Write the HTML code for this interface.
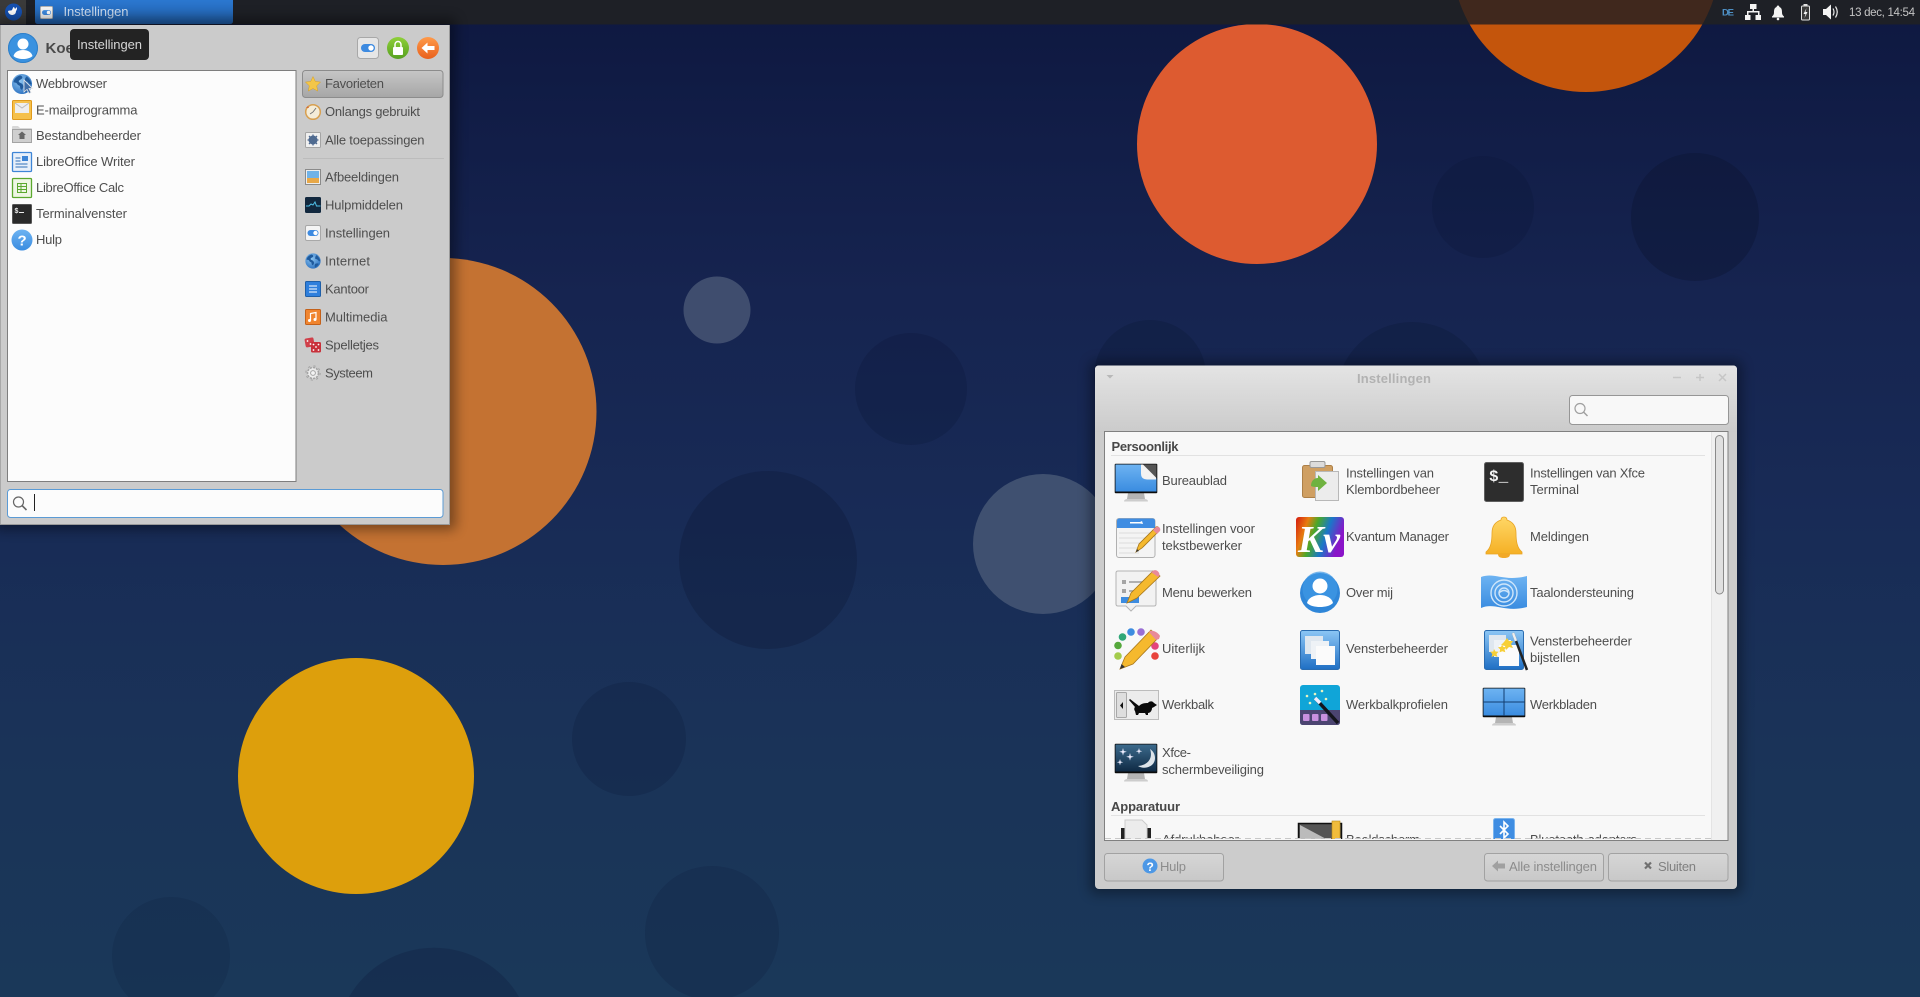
<!DOCTYPE html>
<html><head><meta charset="utf-8"><title>Instellingen</title>
<style>
html,body{margin:0;padding:0;width:1920px;height:997px;overflow:hidden;background:#162a52}
svg{display:block}
text{font-family:"Liberation Sans",sans-serif;font-size:13px;fill:#4e4e4e}
.c{fill:#4e4e4e}
.b{font-weight:bold;fill:#484848}
.d{fill:#8c8c8c}
</style></head><body>
<svg width="1920" height="997" viewBox="0 0 1920 997" xmlns="http://www.w3.org/2000/svg">
<defs>
<linearGradient id="bg" x1="0" y1="0" x2="0" y2="1"><stop offset="0" stop-color="#0e1840"/><stop offset=".3" stop-color="#162450"/><stop offset=".52" stop-color="#182b56"/><stop offset=".75" stop-color="#1a3358"/><stop offset="1" stop-color="#1a3859"/></linearGradient>
<linearGradient id="task" x1="0" y1="0" x2="0" y2="1"><stop offset="0" stop-color="#2b78d0"/><stop offset="1" stop-color="#2160ac"/></linearGradient>
<linearGradient id="tb" x1="0" y1="0" x2="0" y2="1"><stop offset="0" stop-color="#e4e4e4"/><stop offset="1" stop-color="#cbcbcb"/></linearGradient>
<linearGradient id="btn" x1="0" y1="0" x2="0" y2="1"><stop offset="0" stop-color="#d6d6d6"/><stop offset="1" stop-color="#c8c8c8"/></linearGradient>
<linearGradient id="sel" x1="0" y1="0" x2="0" y2="1"><stop offset="0" stop-color="#c6c6c6"/><stop offset="1" stop-color="#a6a6a6"/></linearGradient>
<linearGradient id="blue" x1="0" y1="0" x2="0" y2="1"><stop offset="0" stop-color="#6db3f2"/><stop offset="1" stop-color="#3a8ce0"/></linearGradient>
<linearGradient id="blue2" x1="0" y1="0" x2="0" y2="1"><stop offset="0" stop-color="#8cc6f5"/><stop offset="1" stop-color="#1f6fc4"/></linearGradient>
<linearGradient id="scr" x1="0" y1="0" x2="0" y2="1"><stop offset="0" stop-color="#3c6a8c"/><stop offset="1" stop-color="#0f2a44"/></linearGradient>
<linearGradient id="grn" x1="0" y1="0" x2="0" y2="1"><stop offset="0" stop-color="#8fd03a"/><stop offset="1" stop-color="#56a020"/></linearGradient>
<linearGradient id="org" x1="0" y1="0" x2="0" y2="1"><stop offset="0" stop-color="#ff9a4a"/><stop offset="1" stop-color="#e8601c"/></linearGradient>
<linearGradient id="yel" x1="0" y1="0" x2="0" y2="1"><stop offset="0" stop-color="#ffd766"/><stop offset="1" stop-color="#f5b025"/></linearGradient>
<linearGradient id="rb" x1="0" y1="0" x2="1" y2="0.3"><stop offset="0" stop-color="#d41a10"/><stop offset=".25" stop-color="#e87c10"/><stop offset=".45" stop-color="#4aa82a"/><stop offset=".7" stop-color="#1a78c8"/><stop offset="1" stop-color="#8a14c8"/></linearGradient>
<radialGradient id="glb" cx=".4" cy=".35" r=".7"><stop offset="0" stop-color="#8cc4f0"/><stop offset="1" stop-color="#2a70c0"/></radialGradient>
<filter id="sh" x="-10%" y="-10%" width="120%" height="120%"><feGaussianBlur stdDeviation="6"/></filter>
<clipPath id="cl"><rect x="1105" y="432" width="606" height="407"/></clipPath>
<clipPath id="pn"><rect x="1400" y="0" width="400" height="24.5"/></clipPath>
<symbol id="globe" viewBox="0 0 22 22"><circle cx="11" cy="11" r="10.5" fill="url(#glb)"/><path d="M9 2c-3 1-6 3-7 7 2 1 3 0 4 2s3 1 3 3 1 3 2 3c1-2 2-3 1-5s-3-2-4-3 0-2 2-3 2-3-1-4zM16 3c2 2 4 4 5 8-2 1-3-1-4-2s-3 0-3-2 1-3 2-4zM14 15c2-1 4-1 5 0-1 2-3 4-5 5-1-2-1-3 0-5z" fill="#1f5a9c"/></symbol>
<symbol id="tog" viewBox="0 0 16 16"><rect x=".5" y=".5" width="15" height="15" rx="1.5" fill="#f4f4f4" stroke="#a8a8a8"/><rect x="2.5" y="5" width="11" height="6" rx="3" fill="#3d8ae0"/><circle cx="10.5" cy="8" r="2.2" fill="#fff"/></symbol>
<symbol id="mon" viewBox="0 0 44 40"><path d="M14 30h16l1 6H13z" fill="#b4b4b4"/><path d="M10 38.500q0-2.500 4-2.500h16q4 0 4 2.500z" fill="#cdcdcd"/><rect x=".7" y=".7" width="42.6" height="29.6" rx="1" fill="#0c0c0c"/></symbol>
</defs>

<!-- wallpaper -->
<rect width="1920" height="997" fill="url(#bg)"/>
<circle cx="1586" cy="-42" r="134" fill="#c4550c"/>
<circle cx="1257" cy="144" r="120" fill="#dd5b30"/>
<circle cx="443" cy="411.5" r="153.5" fill="#c47232"/>
<circle cx="356" cy="776" r="118" fill="#dd9f0c"/>
<circle cx="717" cy="310" r="33.5" fill="#3f4d6e"/>
<circle cx="1043" cy="544" r="70" fill="#3f5070"/>
<g fill="#0a1430">
<circle cx="1483" cy="207" r="51" fill-opacity=".22"/><circle cx="1695" cy="217" r="64" fill-opacity=".36"/>
<circle cx="911" cy="389" r="56" fill-opacity=".22"/><circle cx="1150" cy="376" r="56" fill-opacity=".24"/><circle cx="1412" cy="398" r="76" fill-opacity=".24"/>
<circle cx="768" cy="560" r="89" fill-opacity=".26"/><circle cx="629" cy="739" r="57" fill-opacity=".2"/>
<path d="M692.200 997A67 67 0 1 1 731.800 997Z" fill-opacity=".18"/>
<path d="M128.600 997A59 59 0 1 1 213.400 997Z" fill-opacity=".14"/>
<path d="M349 997A98 98 0 0 1 519 997Z" fill-opacity=".22"/>
</g>

<!-- panel -->
<rect width="1920" height="24.5" fill="#1e2026"/>
<circle cx="1586" cy="-42" r="134" fill="#40281d" clip-path="url(#pn)"/>
<rect x="0" y="0" width="26" height="24.5" fill="#3a3a3a"/>
<circle cx="13.5" cy="12" r="8.5" fill="#1550b0"/>
<path d="M8 11c2-1 3 0 4-1 1-2 1-3 2-3l1 2 2-2c0 2 0 3-1 4 0 3-2 4-4 4-2 0-4-2-4-4z" fill="#fff"/>
<path d="M35 0h198v21q0 3-3 3H38q-3 0-3-3z" fill="url(#task)"/>
<use href="#tog" x="40" y="6" width="13" height="13"/>
<text x="63.5" y="16" textLength="65" style="fill:#cfdff2">Instellingen</text>
<text x="1722" y="15.5" textLength="12" style="font-size:9.5px;font-weight:bold;fill:#4d8fc4">DE</text>
<g fill="#f4f4f4"><rect x="1750" y="4" width="6.500" height="5"/><rect x="1752.500" y="9" width="1.500" height="3"/><rect x="1747" y="11" width="12.500" height="1.500"/><rect x="1747" y="12" width="1.500" height="3"/><rect x="1758" y="12" width="1.500" height="3"/><rect x="1745" y="15" width="5.500" height="5"/><rect x="1755.500" y="15" width="5.500" height="5"/></g>
<path d="M1778 5.500c.8 0 1.300.6 1.400 1.500 2.300.8 2.600 3 2.600 5.500 0 2 .8 3 2 4v1h-12v-1c1.200-1 2-2 2-4 0-2.500.3-4.700 2.600-5.500.1-.9.6-1.500 1.400-1.500z" fill="#f4f4f4"/><circle cx="1778" cy="19" r="1.300" fill="#f4f4f4"/>
<rect x="1801.500" y="6" width="8" height="14" rx="1" fill="#3a3a3a" stroke="#e0e0e0"/><rect x="1803.500" y="4" width="4" height="2" fill="#e0e0e0"/><path d="M1806.500 8l-3 6h2l-1 4 3-6h-2z" fill="#f4f4f4"/>
<path d="M1823 9h3l5-4.500v15l-5-4.500h-3z" fill="#f4f4f4"/><path d="M1833 8.500q2 3.500 0 7M1835.500 6.500q3.500 5.500 0 11" fill="none" stroke="#eaeaea" stroke-width="1.200"/>
<text x="1849" y="16" textLength="66" style="font-size:11.500px;fill:#c4c4c4">13 dec, 14:54</text>

<!-- settings window -->
<rect x="1090" y="361" width="652" height="533" rx="6" fill="#000" opacity=".35" filter="url(#sh)"/>
<rect x="1095" y="365.500" width="642" height="523.500" rx="4" fill="#cccccc"/>
<path d="M1095 432v-62.500q0-4 4-4h634q4 0 4 4v62.500z" fill="url(#tb)"/>
<path d="M1106.500 375h7l-3.500 3.500z" fill="#b8b8b8"/>
<text x="1357" y="383" class="b" textLength="74" style="fill:#b2b2b2">Instellingen</text>
<g stroke="#c6c6c6" stroke-width="1.500" fill="none"><path d="M1673 377.500h8"/><path d="M1696 377.500h8M1700 374v7"/><path d="M1719 374l7 7m0-7l-7 7"/></g>
<rect x="1569.500" y="395.500" width="159" height="29" rx="3" fill="#f8f8f8" stroke="#969696"/>
<circle cx="1580" cy="408.500" r="5" fill="none" stroke="#a0a0a0" stroke-width="1.200"/><path d="M1583.500 412l4 4" stroke="#a0a0a0" stroke-width="1.500"/>
<rect x="1104.500" y="431.500" width="623.500" height="409" fill="#f8f8f8" stroke="#808080"/>
<rect x="1711" y="432" width="16.500" height="408" fill="#f0f0f0"/><rect x="1711" y="432" width="1" height="408" fill="#e4e4e4"/>
<rect x="1715.500" y="435.500" width="8" height="158.500" rx="4" fill="#e0e0e0" stroke="#8a8a8a"/>

<text x="1111.500" y="451" class="b" textLength="67">Persoonlijk</text>
<rect x="1111" y="455" width="594" height="1" fill="#e2e2e2"/>
<text x="1111" y="811" class="b" textLength="69">Apparatuur</text>
<rect x="1111" y="815" width="594" height="1" fill="#e2e2e2"/>

<!-- Items text -->
<g class="c">
<text x="1162" y="485" textLength="65" class="c">Bureaublad</text>
<text x="1346" y="477.500" textLength="88" class="c">Instellingen van</text>
<text x="1346" y="494" textLength="94" class="c">Klembordbeheer</text>
<text x="1530" y="477.500" textLength="115" class="c">Instellingen van Xfce</text>
<text x="1530" y="494" textLength="49" class="c">Terminal</text>
<text x="1162" y="533" textLength="93" class="c">Instellingen voor</text>
<text x="1162" y="550" textLength="80" class="c">tekstbewerker</text>
<text x="1346" y="541" textLength="103" class="c">Kvantum Manager</text>
<text x="1530" y="541" textLength="59" class="c">Meldingen</text>
<text x="1162" y="597" textLength="90" class="c">Menu bewerken</text>
<text x="1346" y="597" textLength="47" class="c">Over mij</text>
<text x="1530" y="597" textLength="104" class="c">Taalondersteuning</text>
<text x="1162" y="653" textLength="43" class="c">Uiterlijk</text>
<text x="1346" y="653" textLength="102" class="c">Vensterbeheerder</text>
<text x="1530" y="645.500" textLength="102" class="c">Vensterbeheerder</text>
<text x="1530" y="662" textLength="50" class="c">bijstellen</text>
<text x="1162" y="709" textLength="52" class="c">Werkbalk</text>
<text x="1346" y="709" textLength="102" class="c">Werkbalkprofielen</text>
<text x="1530" y="709" textLength="67" class="c">Werkbladen</text>
<text x="1162" y="757" textLength="29" class="c">Xfce-</text>
<text x="1162" y="774" textLength="102" class="c">schermbeveiliging</text>
</g>
<g clip-path="url(#cl)">
<text x="1162" y="844" textLength="77" class="c">Afdrukbeheer</text>
<text x="1346" y="844" textLength="74" class="c">Beeldscherm</text>
<text x="1530" y="844" textLength="107" class="c">Bluetooth-adapters</text>
<!-- printer -->
<rect x="1121" y="828" width="30" height="14" fill="#222"/><path d="M1125 820h17l5 5v16h-22z" fill="#ececec" stroke="#ccc"/>
<!-- display -->
<rect x="1298.500" y="823.500" width="43" height="18" fill="#555" stroke="#111" stroke-width="1.500"/><path d="M1300 825l30 16h-30z" fill="#ddd" opacity=".75"/><rect x="1332" y="821" width="8" height="20" fill="#f0bc3c" stroke="#b88a18" stroke-width=".6"/>
<!-- bluetooth -->
<rect x="1493.500" y="818.500" width="21" height="24" rx="2" fill="#3f8de2" stroke="#7ab4ee"/><path d="M1500 826l8 8-4 4v-16l4 4-8 8" fill="none" stroke="#fff" stroke-width="1.600"/>
</g>
<path d="M1105 838.500h606" stroke="#c8c8c8" stroke-dasharray="6 4"/>

<!-- Bureaublad -->
<use href="#mon" x="1114" y="463" width="44" height="40"/>
<rect x="1115.500" y="464.500" width="41" height="27" fill="url(#blue)"/>
<path d="M1142 464.500h14.500v14z" fill="#555"/><path d="M1141 464.500h2l13 13v2h-9q-6 0-6-6z" fill="#f2f2f2"/>
<!-- Clipboard -->
<rect x="1302.500" y="465.500" width="30" height="32" rx="2" fill="#cf9f62" stroke="#ad8048"/><rect x="1310" y="461.500" width="15" height="6" rx="1.500" fill="#dcdcdc" stroke="#999"/>
<rect x="1315.500" y="471.500" width="23" height="29" fill="#ececec" stroke="#b8b8b8"/>
<path d="M1311 486c0-5 3-8 7-8v-3l9 8-9 8v-4c-3 0-5 0-7-1z" fill="#6fb240"/>
<!-- Terminal -->
<rect x="1484.500" y="462.500" width="39" height="39" rx="2" fill="#2d2d2d" stroke="#606060"/>
<text x="1489" y="481" style="font-size:16px;font-weight:bold;fill:#f4f4f4;font-family:'Liberation Mono',monospace">$_</text>
<!-- text editor prefs -->
<rect x="1116.500" y="518.500" width="38.500" height="39" rx="2.500" fill="#f4f4f4" stroke="#b0b0b0"/>
<path d="M1117 528v-7q0-2.500 2.500-2.500h33q2.500 0 2.500 2.500v7z" fill="#3f8de2"/>
<path d="M1130 522h10l2-1 1 3-3-.5h-10z" fill="#fff"/>
<g stroke="#dcdcdc"><path d="M1119 533h34M1119 538h30M1119 543h26M1119 548h22M1119 553h20"/></g>
<path d="M1136 552l3-8 17-17c2-1 4 1 3 4l-17 17z" fill="#f5b92e" stroke="#a8781c" stroke-width=".8"/><path d="M1153 530l4 4 3-3c1-3-1-5-4-4z" fill="#e88a98"/><path d="M1136 552l1-3 2 2z" fill="#333"/>
<!-- Kvantum -->
<rect x="1296" y="517" width="48" height="40" rx="3" fill="url(#rb)"/>
<text x="1298" y="552" style="font-family:'Liberation Serif',serif;font-size:38px;font-weight:bold;font-style:italic;fill:#fff" textLength="42">Kv</text>
<!-- Bell -->
<path d="M1504 517c2 0 3 1 3 3 6 2 9 6 9 13 0 8 1 15 6 19v2h-36v-2c5-4 6-11 6-19 0-7 3-11 9-13 0-2 1-3 3-3z" fill="url(#yel)" stroke="#e8a424" stroke-width=".8"/>
<path d="M1498 554h12c0 3-2 4-6 4s-6-1-6-4z" fill="#f2a928"/>
<!-- Menu editor -->
<path d="M1118 571h36q2 0 2 2v31q0 2-2 2h-18l-5 5-5-5h-8q-2 0-2-2v-31q0-2 2-2z" fill="#f2f2f2" stroke="#b4b4b4"/>
<g fill="#a4a4a4"><rect x="1122" y="580" width="4" height="4"/><rect x="1122" y="589" width="4" height="4"/></g>
<g stroke="#9a9a9a" stroke-width="1.500"><path d="M1129 582h18M1129 591h8"/></g>
<rect x="1121" y="597" width="18" height="6" fill="#3d8ce0"/>
<path d="M1127 603l4-10 22-22 7 5-23 22z" fill="#f5b92e" stroke="#a8781c" stroke-width=".8"/><path d="M1153 571c3-3 8 2 6 5l-1 1-7-5z" fill="#e88a98"/>
<!-- Over mij -->
<circle cx="1320" cy="593" r="20" fill="#2f86d8"/><circle cx="1320" cy="589" r="17.500" fill="#3f98e6" opacity=".7"/>
<circle cx="1320" cy="586" r="7.500" fill="#fff"/><path d="M1307 603c1-5 7-8 13-8s12 3 13 8c-3 3-8 4-13 4s-10-1-13-4z" fill="#fff"/>
<!-- Flag -->
<path d="M1481 577c14-5 22 5 46-1v31c-22 6-32-5-46 1z" fill="url(#blue)"/>
<g fill="none" stroke="#cfe6fa" stroke-width="1.400"><circle cx="1504" cy="593" r="13"/><circle cx="1504" cy="593" r="9"/><circle cx="1504" cy="593" r="5"/><path d="M1499 593q5-5 10 0"/></g>
<!-- Uiterlijk -->
<g><circle cx="1118" cy="656" r="3.800" fill="#a4cc4c"/><circle cx="1118" cy="645.500" r="3.800" fill="#55a83c"/><circle cx="1122.500" cy="637" r="3.800" fill="#30a878"/><circle cx="1131" cy="632" r="3.800" fill="#3d8ce0"/><circle cx="1141" cy="632" r="3.800" fill="#9a6fd4"/><circle cx="1155" cy="646" r="3.800" fill="#e4457c"/><circle cx="1155" cy="656" r="3.800" fill="#e8443c"/></g>
<path d="M1120 669l5-12 26-27 8 7-26 27z" fill="#f5b92e" stroke="#a8781c" stroke-width=".8"/><path d="M1149 632c2-3 9 0 11 4l-1 3-3 1z" fill="#e88a98"/><path d="M1120 669l1.500-5 3.500 3z" fill="#333"/>
<!-- Vensterbeheerder -->
<rect x="1300.500" y="630.500" width="39" height="39" rx="2" fill="url(#blue2)" stroke="#2a6cb0"/>
<rect x="1305" y="636" width="18" height="18" fill="#dfe7ef"/><rect x="1311" y="641" width="18" height="18" fill="#eef2f6"/><rect x="1316" y="646" width="19" height="19" fill="#fbfbfb"/>
<!-- Tweaks -->
<rect x="1484.500" y="630.500" width="39" height="39" rx="2" fill="url(#blue2)" stroke="#2a6cb0"/>
<rect x="1489" y="635" width="17" height="17" fill="#dfe7ef"/><rect x="1494" y="640" width="17" height="17" fill="#eef2f6"/><rect x="1499" y="645" width="20" height="21" fill="#fbfbfb"/>
<path d="M1507 638l2 3 4 0-2 3 2 4-4-1-3 3-1-4-4-1 3-3z" fill="#f7cf36"/><path d="M1494 649l1.500 2.500 3 .2-2 2.300 1 3-3-1.300-3 1.300.8-3-2-2.300 3-.2z" fill="#f7cf36"/><path d="M1502 645l1.500 2 3 .2-2 2 .8 3-3-1-2.800 1.200.5-3-2-2.200 3-.3z" fill="#f7cf36"/>
<path d="M1513 633l14 37" stroke="#222" stroke-width="2.500"/><path d="M1513 633l3 8" stroke="#eee" stroke-width="2.500"/>
<!-- Werkbalk -->
<rect x="1114.500" y="690.500" width="44" height="29" fill="#ececec" stroke="#bcbcbc"/><rect x="1116.500" y="692.500" width="10" height="25" rx="1" fill="#dedede" stroke="#a8a8a8"/><path d="M1123 702v7l-3-3.500z" fill="#111"/>
<path d="M1130 699l9 7c3-3 6-3 9-3 1-2 4-2 5-1l1 1 3 2-3 2-2 1c0 3-2 5-4 5v2h-2l-1-2h-6l-1 2h-2l-1-4c-1-1-1-3 0-4l-6-7z" fill="#0a0a0a"/>
<!-- Profiles -->
<rect x="1300" y="685" width="40" height="40" rx="3" fill="#10a5d8"/><path d="M1300 710h40v12q0 3-3 3h-34q-3 0-3-3z" fill="#4b4470"/>
<g fill="#c890de"><rect x="1303" y="714" width="6.500" height="7" rx="1"/><rect x="1312" y="714" width="6.500" height="7" rx="1"/><rect x="1321" y="714" width="6.500" height="7" rx="1"/></g>
<path d="M1315 698l23 25" stroke="#14141c" stroke-width="3.500"/><path d="M1315 698l5 5" stroke="#eef" stroke-width="3.500"/>
<g fill="#e8f4c0"><circle cx="1307" cy="696" r="1.300"/><circle cx="1315" cy="694" r="1.300"/><circle cx="1322" cy="691" r="1.300"/><circle cx="1326" cy="699" r="1.300"/><circle cx="1310" cy="703" r="1.300"/></g>
<!-- Werkbladen -->
<use href="#mon" x="1482" y="687" width="44" height="40"/>
<rect x="1483.500" y="688.500" width="41" height="27" fill="url(#blue)"/><path d="M1504 688v28M1483 702h42" stroke="#123d70" stroke-width="1"/>
<!-- Screensaver -->
<use href="#mon" x="1114" y="743" width="44" height="40"/>
<rect x="1115.500" y="744.500" width="41" height="27" fill="url(#scr)"/>
<path d="M1150 749c3 8-1 16-12 17 6 4 17 1 17-8 0-4-2-7-5-9z" fill="#dde4ea"/>
<g fill="#eef"><path d="M1123 748l.8 3 3 .8-3 .8-.8 3-.8-3-3-.8 3-.8z"/><path d="M1130 753l.8 3 3 .8-3 .8-.8 3-.8-3-3-.8 3-.8z"/><path d="M1139 748l.7 2.500 2.500.7-2.500.7-.7 2.500-.7-2.500-2.500-.7 2.500-.7z"/><path d="M1120 759l.7 2.500 2.500.7-2.500.7-.7 2.500-.7-2.500-2.500-.7 2.500-.7z"/></g>

<!-- window buttons -->
<rect x="1104.500" y="853.500" width="119" height="27.500" rx="3" fill="url(#btn)" stroke="#a2a2a2"/>
<circle cx="1150" cy="866" r="7.500" fill="#4d98e6"/><text x="1146.500" y="871" style="font-size:12px;font-weight:bold;fill:#fff">?</text>
<text x="1160" y="871" class="d" textLength="26">Hulp</text>
<rect x="1484.500" y="853.500" width="119" height="27.500" rx="3" fill="url(#btn)" stroke="#a2a2a2"/>
<path d="M1492 866l6-5.500v3h7v5h-7v3z" fill="#a0a0a0"/>
<text x="1509" y="871" class="d" textLength="88">Alle instellingen</text>
<rect x="1608.500" y="853.500" width="119.500" height="27.500" rx="3" fill="url(#btn)" stroke="#a2a2a2"/>
<path d="M1645 862.500l6 6m0-6l-6 6" stroke="#707070" stroke-width="2.200"/>
<text x="1658" y="871" class="d" textLength="38" style="fill:#808080">Sluiten</text>

<!-- menu -->
<rect x="-6" y="18" width="462" height="512" rx="4" fill="#000" opacity=".38" filter="url(#sh)"/>
<rect x="0" y="25" width="449.500" height="499" fill="#cbcbcb"/>
<rect x="449" y="25" width="1" height="499" fill="#9a9a9a"/><rect y="524" width="450" height="1" fill="#9a9a9a"/>
<rect y="25" width="1" height="499" fill="#a8a8a8"/>
<!-- header -->
<circle cx="23" cy="48" r="15" fill="#3a92e0"/><circle cx="23" cy="48" r="14.500" fill="none" stroke="#2f7fc8"/>
<circle cx="23" cy="44" r="5.500" fill="#fff"/><path d="M13.500 56c1-4 5-6 9.500-6s8.500 2 9.500 6c-2 2-6 3-9.500 3s-7.500-1-9.500-3z" fill="#fff"/>
<text x="45.500" y="53" style="font-size:15px;font-weight:bold;fill:#4a4a4a">Koen</text>
<rect x="70" y="29" width="79" height="31" rx="4" fill="#232323"/>
<text x="77" y="49" textLength="65" style="fill:#d6d6d6">Instellingen</text>
<rect x="357.500" y="37.500" width="21" height="21" rx="3" fill="#e6e6e6" stroke="#a8a8a8"/><rect x="361" y="44" width="14" height="8" rx="4" fill="#3d8ae0"/><circle cx="371" cy="48" r="2.700" fill="#fff"/>
<circle cx="398" cy="48" r="11" fill="url(#grn)"/><rect x="393" y="47" width="10" height="8" rx="1" fill="#fff"/><path d="M395 47v-2.500a3 3 0 0 1 6 0V47" fill="none" stroke="#fff" stroke-width="1.500"/>
<circle cx="428" cy="48" r="11" fill="url(#org)"/><path d="M421.500 48l6-5.500v3.500h7v4h-7v3.500z" fill="#fff"/>
<!-- list -->
<rect x="7.500" y="70.500" width="288.500" height="411" fill="#fcfcfc" stroke="#7e7e7e"/>
<use href="#globe" x="11.500" y="73.500" width="21" height="21"/>
<path d="M24 80v12l3-2.500 2 4 2-1-2-4h3.500z" fill="#3f6ea8" stroke="#e8e8e8" stroke-width=".8"/>
<rect x="12.500" y="100.500" width="19" height="19" rx="1" fill="#f5c04a" stroke="#e09a1c"/><rect x="15" y="103" width="14" height="10" fill="#eee"/><path d="M15 103l7 5 7-5" fill="none" stroke="#bbb"/>
<path d="M12 132v-5q0-1 1-1h5l2 2h11q1 0 1 1v3z" fill="#d8d8d8"/><rect x="12.500" y="129.500" width="19" height="13" fill="#cfcfcf" stroke="#a4a4a4"/><path d="M22 131.500l4 3.500h-1.500v4h-5v-4H18z" fill="#666"/>
<rect x="12.500" y="152.500" width="19" height="19" rx="1" fill="#e8f0fa" stroke="#3e85d6" stroke-width="1.300"/><path d="M15.500 158h5M15.500 161h5M15.500 164h12M15.500 167h12" stroke="#2f6fb8"/><rect x="22" y="156" width="6" height="5" fill="#3e85d6"/>
<rect x="12.500" y="178.500" width="19" height="19" rx="1" fill="#eef6e4" stroke="#5ba82e" stroke-width="1.300"/><rect x="17.500" y="183.500" width="9" height="9" fill="none" stroke="#5ba82e"/><path d="M17.500 186.500h9M17.500 189.500h9M21 183.500v9" stroke="#5ba82e"/>
<rect x="12.500" y="204.500" width="19" height="19" rx="1" fill="#2a2a2a" stroke="#555"/><text x="14.500" y="213" style="font-size:7px;font-weight:bold;fill:#eee">$</text><rect x="19" y="212" width="5" height="1" fill="#eee"/>
<circle cx="22" cy="240" r="10.500" fill="url(#blue)"/><text x="17.500" y="245.500" style="font-size:15px;font-weight:bold;fill:#fff">?</text>
<text x="36" y="88" textLength="71" class="c" >Webbrowser</text>
<text x="36" y="114.500" textLength="101.500" class="c">E-mailprogramma</text>
<text x="36" y="140" textLength="105" class="c">Bestandbeheerder</text>
<text x="36" y="166" textLength="99" class="c">LibreOffice Writer</text>
<text x="36" y="192" textLength="88" class="c">LibreOffice Calc</text>
<text x="36" y="218" textLength="91" class="c">Terminalvenster</text>
<text x="36" y="244" textLength="26" class="c">Hulp</text>
<!-- categories -->
<rect x="302.500" y="70.500" width="140.500" height="27" rx="3" fill="url(#sel)" stroke="#8c8c8c"/>
<path d="M313 76.500l2.300 4.900 5.300.7-3.900 3.700 1 5.300-4.700-2.600-4.700 2.600 1-5.300-3.900-3.700 5.300-.7z" fill="#f3c649" stroke="#d8a020" stroke-width=".5"/>
<circle cx="313" cy="112" r="7.300" fill="#f4ecd8" stroke="#d8a050" stroke-width="1.500"/><path d="M313 112l3-4M313 112l-3 2" stroke="#777"/><path d="M306 108l2-2 1 2z" fill="#d06a3a"/>
<rect x="305.500" y="132.500" width="15" height="15" rx="1" fill="#f0f0f0" stroke="#a4a4a4"/><circle cx="313" cy="140" r="4.500" fill="#4f6a90"/><circle cx="313" cy="140" r="1.700" fill="#f0f0f0"/><path d="M313 134.500v11M307.500 140h11M309 136l8 8m0-8l-8 8" stroke="#4f6a90" stroke-width="1.300"/>
<rect x="303" y="158" width="141" height="1" fill="#bcbcbc"/>
<rect x="305.500" y="169.500" width="15" height="15" fill="#eee" stroke="#8a8a8a"/><rect x="307" y="171" width="12" height="7" fill="#6fb2e8"/><rect x="307" y="178" width="12" height="5" fill="#e8a848"/>
<rect x="305" y="197" width="16" height="16" rx="1.500" fill="#12283e"/><path d="M306 206h3l2-2 2 1 2-3 1.500 4h4" fill="none" stroke="#4fc0e8" stroke-width="1"/>
<use href="#tog" x="305" y="225" width="16" height="16"/>
<use href="#globe" x="305" y="253" width="16" height="16"/>
<rect x="305.500" y="281.500" width="15" height="15" rx="1" fill="#2f7fdc" stroke="#1f5fa8"/><path d="M309 286h8M309 289h8M309 292h8" stroke="#fff"/>
<rect x="305.500" y="309.500" width="15" height="15" rx="1" fill="#f0852f" stroke="#c4611a"/><path d="M310.500 320.500v-7l5.500-1v7" fill="none" stroke="#fff" stroke-width="1.200"/><circle cx="309.500" cy="320.500" r="1.500" fill="#fff"/><circle cx="315" cy="319.500" r="1.500" fill="#fff"/>
<rect x="305" y="338" width="9" height="9" rx="1.500" fill="#d0404a" transform="rotate(-10 309 342)"/><rect x="311" y="342" width="10" height="10.500" rx="1.500" fill="#c8303a"/><g fill="#fff"><circle cx="313.500" cy="344.500" r=".9"/><circle cx="318.500" cy="344.500" r=".9"/><circle cx="316" cy="347" r=".9"/><circle cx="313.500" cy="350" r=".9"/><circle cx="318.500" cy="350" r=".9"/><circle cx="307.500" cy="341" r=".9"/><circle cx="310.500" cy="344" r=".9"/></g>
<circle cx="313" cy="373" r="5.500" fill="#ececec" stroke="#a4a4a4" stroke-width="1.600" stroke-dasharray="2.200 1"/><circle cx="313" cy="373" r="7.200" fill="none" stroke="#a4a4a4" stroke-width="1" stroke-dasharray="2.200 3.500"/><circle cx="313" cy="373" r="2.400" fill="#f4f4f4" stroke="#a4a4a4"/>
<text x="325" y="88" textLength="59" class="c">Favorieten</text>
<text x="325" y="116" textLength="95" class="c">Onlangs gebruikt</text>
<text x="325" y="144.500" textLength="99.500" class="c">Alle toepassingen</text>
<text x="325" y="181.500" textLength="74" class="c">Afbeeldingen</text>
<text x="325" y="209.500" textLength="78" class="c">Hulpmiddelen</text>
<text x="325" y="237.500" textLength="65" class="c">Instellingen</text>
<text x="325" y="265.500" textLength="45" class="c">Internet</text>
<text x="325" y="293.500" textLength="44" class="c">Kantoor</text>
<text x="325" y="321.500" textLength="62.500" class="c">Multimedia</text>
<text x="325" y="349.500" textLength="54" class="c">Spelletjes</text>
<text x="325" y="377.500" textLength="48" class="c">Systeem</text>
<!-- search -->
<rect x="7.500" y="489.500" width="435.500" height="28" rx="3" fill="#fcfcfc" stroke="#5b9bd5"/>
<circle cx="18.500" cy="502" r="5" fill="none" stroke="#666" stroke-width="1.200"/><path d="M22 505.500l4.500 4.500" stroke="#666" stroke-width="1.600"/>
<rect x="34" y="494" width="1" height="17" fill="#222"/>
</svg>
</body></html>
